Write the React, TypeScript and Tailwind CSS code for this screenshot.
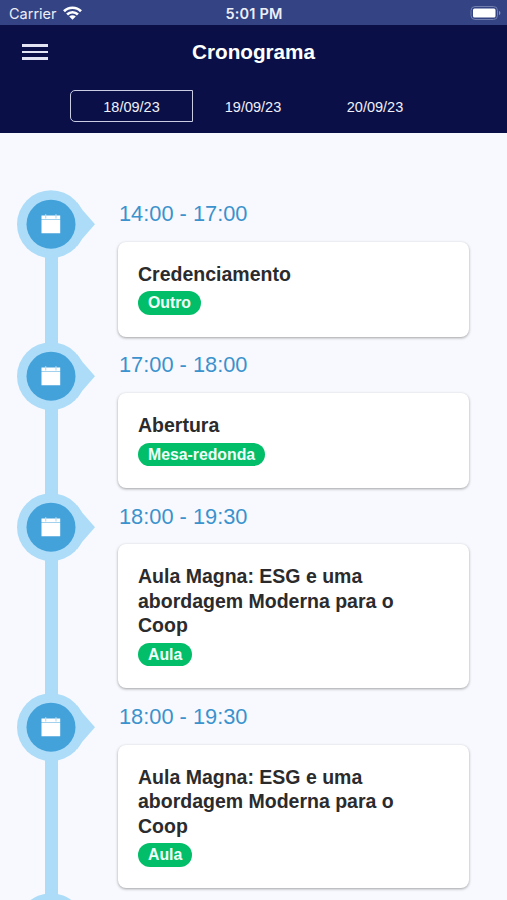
import React from 'react';

interface ScheduleItem {
  id: number;
  time: string;
  title: string;
  tag: string;
}

const DATES = ['18/09/23', '19/09/23', '20/09/23'];

const ITEMS: ScheduleItem[] = [
  { id: 1, time: '14:00 - 17:00', title: 'Credenciamento', tag: 'Outro' },
  { id: 2, time: '17:00 - 18:00', title: 'Abertura', tag: 'Mesa-redonda' },
  { id: 3, time: '18:00 - 19:30', title: 'Aula Magna: ESG e uma abordagem Moderna para o Coop', tag: 'Aula' },
  { id: 4, time: '18:00 - 19:30', title: 'Aula Magna: ESG e uma abordagem Moderna para o Coop', tag: 'Aula' },
];

const StatusBar: React.FC = () => (
  <div className="h-[25px] shrink-0 bg-[#334383] text-[#eceef8] grid grid-cols-3 items-center pl-[9px] pr-[6px] pt-[3px] font-['Inter',sans-serif]">
    <div className="flex items-center gap-[6px]">
      <span className="text-[14.5px] leading-none">Carrier</span>
      <svg width="19" height="14" viewBox="0 0 19 14" className="-mt-[3px]" fill="none" stroke="#fff" strokeWidth="2.7">
        <path d="M1 5.2C5.6.6 13.4.6 18 5.2" />
        <path d="M4.1 8.5c3-3 7.8-3 10.8 0" />
        <path d="M9.5 13.8 6.2 10.6c1.9-1.7 4.7-1.7 6.6 0z" fill="#fff" stroke="none" />
      </svg>
    </div>
    <div className="-ml-[2px] text-center text-[14.5px] leading-none font-semibold tracking-[0.2px]">5:01 PM</div>
    <div className="flex justify-end">
      <svg width="31" height="14" viewBox="0 0 31 14" className="-mt-[3px]">
        <rect x="1" y=".5" width="26.5" height="13" rx="4" fill="none" stroke="#727eae" />
        <rect x="3" y="2.4" width="22.5" height="9.2" rx="1.5" fill="#fff" />
        <path d="M29 4.8c1.9.8 1.9 3.6 0 4.4z" fill="#8490ba" />
      </svg>
    </div>
  </div>
);

const Header: React.FC = () => (
  <header className="h-[108px] shrink-0 bg-[#0a1047] text-white flex flex-col">
    <div className="h-[54px] grid grid-cols-[60px_1fr_60px] items-center">
      <button className="ml-[22px] w-[26px] flex flex-col gap-[4px]" aria-label="Menu">
        <span className="h-[2.5px] w-full bg-[#e3e4f3]"></span>
        <span className="h-[2.5px] w-full bg-[#e3e4f3]"></span>
        <span className="h-[2.5px] w-full bg-[#e3e4f3]"></span>
      </button>
      <h1 className="text-center text-[20.7px] font-bold">Cronograma</h1>
    </div>
    <div className="mt-[11px] pl-[70px] flex text-[14.5px] text-[#f0f1fa]">
      {DATES.map((date, i) => (
        <button
          key={date}
          className={
            i === 0
              ? 'w-[123px] h-[32px] pt-[3px] border-[1.5px] border-[#c9cce2] rounded-l-[5px]'
              : 'w-[122px] h-[32px] pt-[3px] pr-[2px]'
          }
        >
          {date}
        </button>
      ))}
    </div>
  </header>
);

// Round marker with a pointer towards the time label
const Marker: React.FC = () => (
  <svg width="79" height="70" viewBox="0 0 79 70" className="relative block shrink-0">
    <circle cx="34" cy="34.2" r="34" fill="#addcf9" />
    <path d="M60 12 65.500 20 78 34.200 65.500 48.400 60 56.400Z" fill="#addcf9" />
    <circle cx="34" cy="34.2" r="24.5" fill="#44a2da" />
    <path d="M24.5 25.5H43.2V29.4H24.5Z M24.5 30H43.2V43.2H24.5Z" fill="#fff" />
    <path d="M28.7 24.2v4.300M39 24.2v4.300" stroke="#b9def3" strokeWidth="1.2" />
  </svg>
);

const TimelineItem: React.FC<{ item: ScheduleItem }> = ({ item }) => (
  <li className="flex">
    <div className="w-[79px] shrink-0 flex flex-col">
      <Marker />
      <div className="-mt-[3px] -mb-[3px] ml-[28px] w-[12.5px] grow bg-[#addcf9]"></div>
    </div>
    <div className="ml-[22px] w-[351px] pb-[5px]">
      <div className="h-[51.5px] pl-px pt-[7.7px] text-[21.8px] leading-[31px] text-[#3b92cc]">{item.time}</div>
      <div className="rounded-[8px] bg-white px-[20px] pt-[20px] pb-[21.8px] shadow-[0_1px_3px_rgba(0,0,0,0.36)]">
        <h2 className="w-[275px] text-[19.5px] leading-[24.5px] font-bold text-[#2b2b2d]">{item.title}</h2>
        <div className="mt-[5px] flex">
          <span className="h-[23.5px] rounded-full bg-[#02be68] px-[10px] text-[15.8px] leading-[24px] font-bold text-[#f0fff7]">{item.tag}</span>
        </div>
      </div>
    </div>
  </li>
);

export default function App() {
  return (
    <div className="w-full h-[900px] overflow-hidden flex flex-col bg-[#f8f9fe] font-['Liberation_Sans',Arial,sans-serif]">
      <StatusBar />
      <Header />
      <ul className="mt-[57.3px] pl-[17px] flex flex-col">
        {ITEMS.map((item) => (
          <TimelineItem key={item.id} item={item} />
        ))}
        <li className="h-[70px]">
          <Marker />
        </li>
      </ul>
    </div>
  );
}
